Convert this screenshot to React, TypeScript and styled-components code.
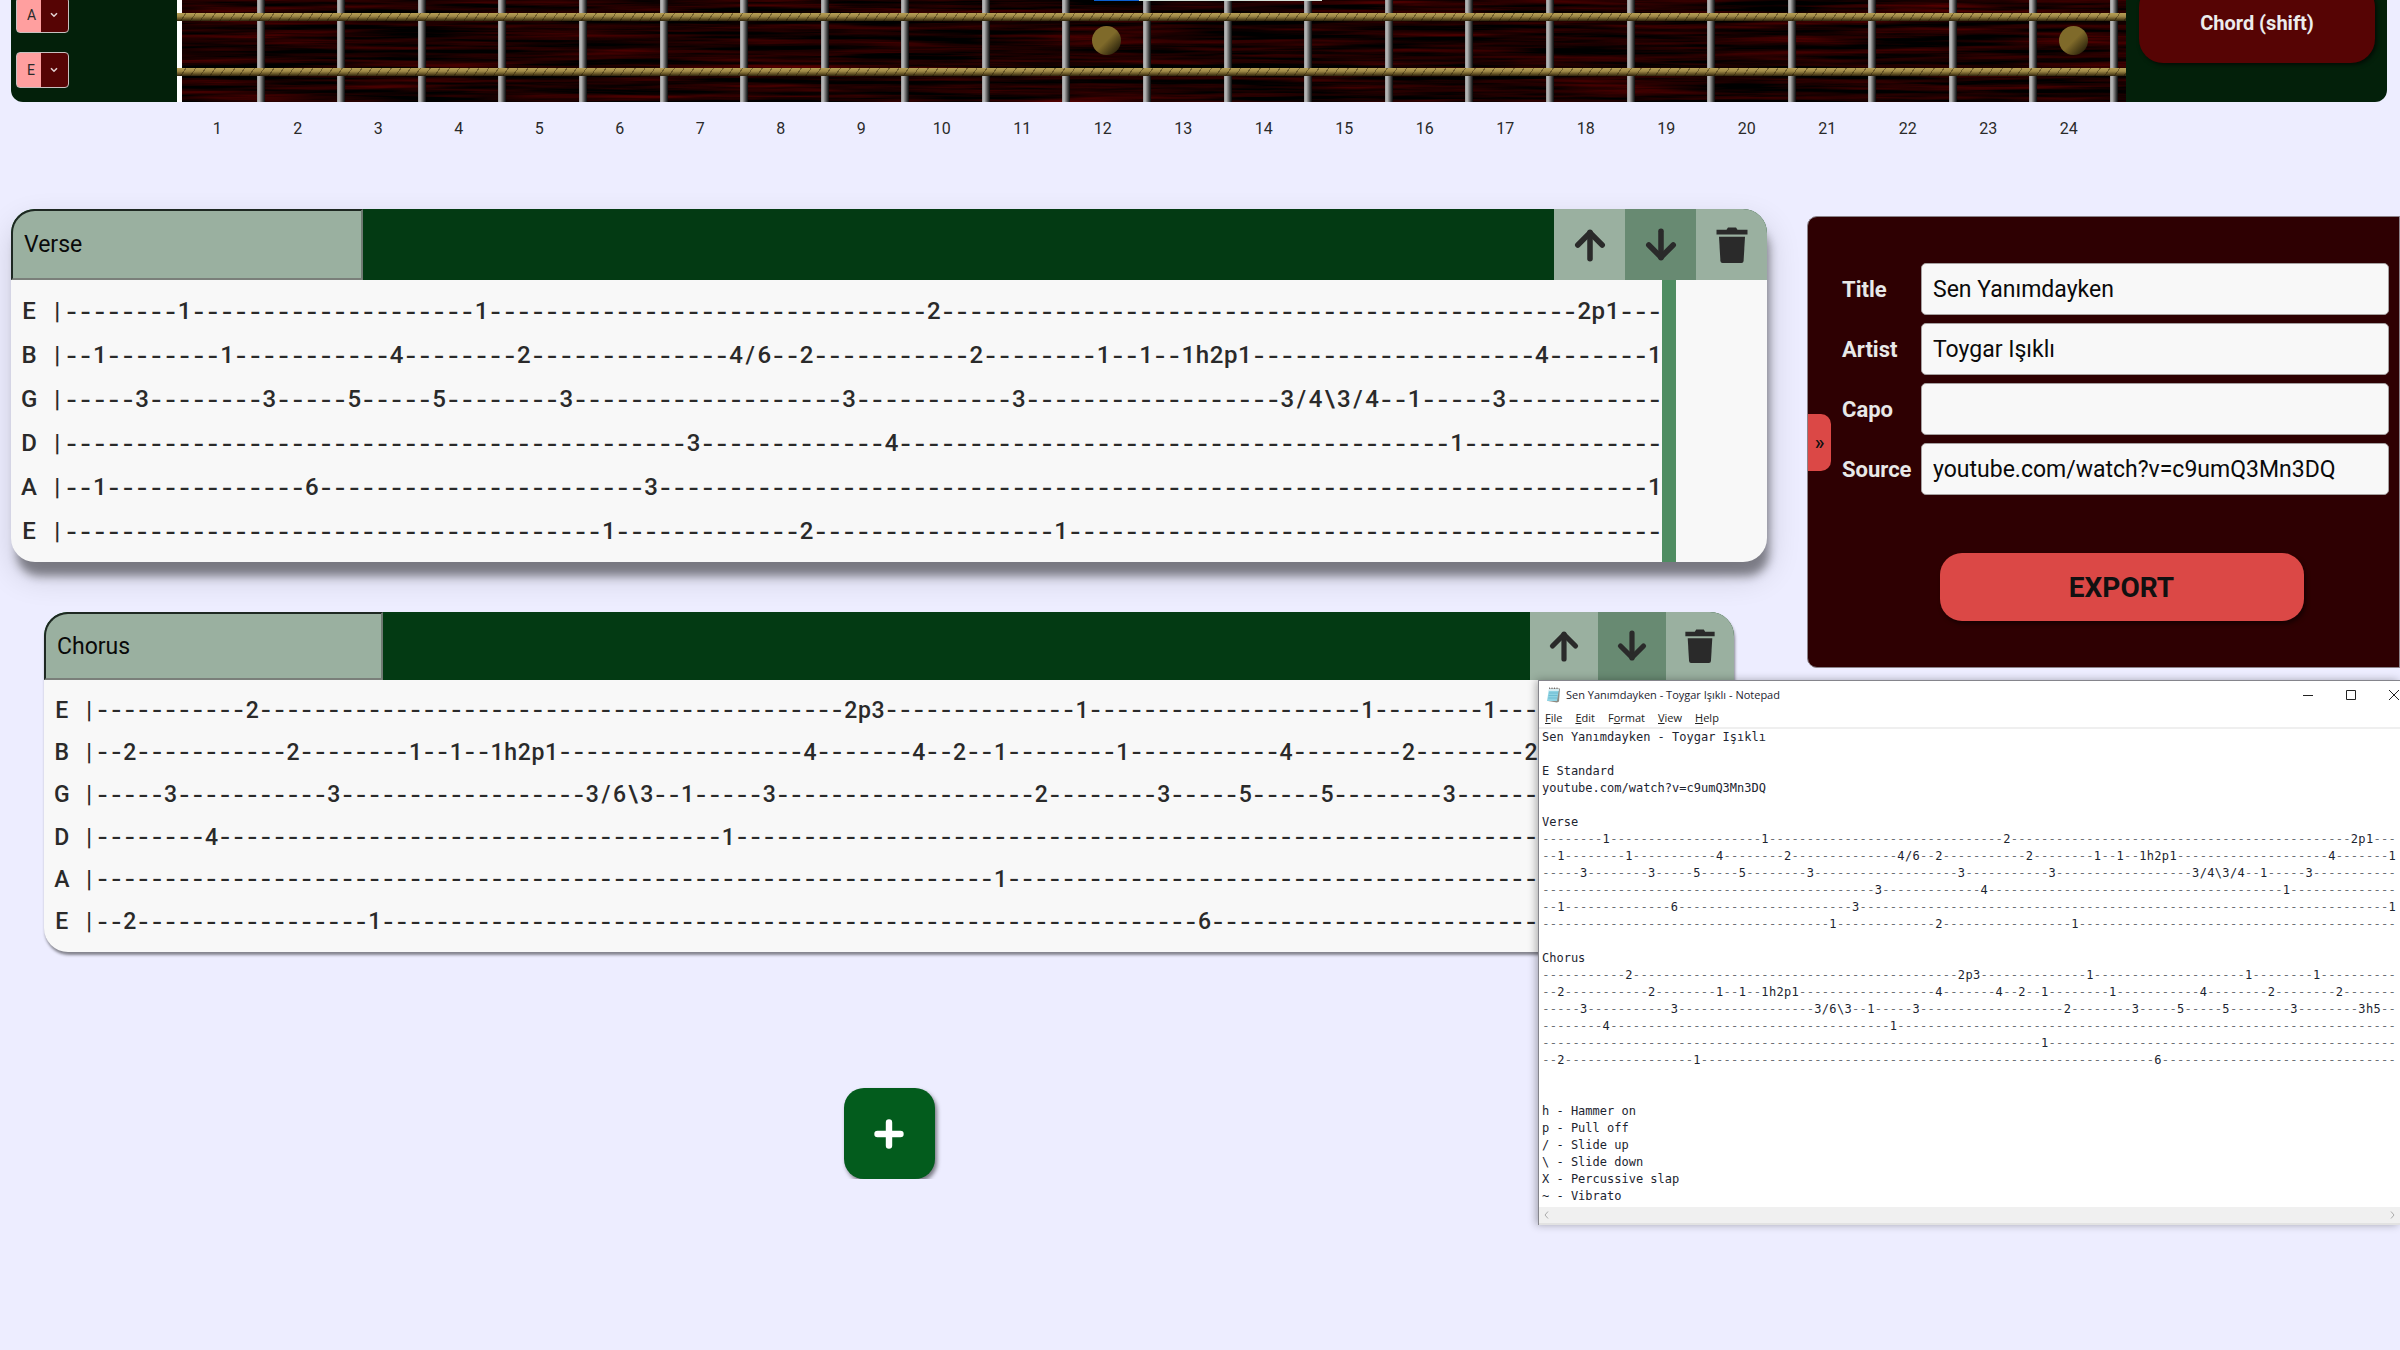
import React from "react";
import styled, { createGlobalStyle } from "styled-components";

const GlobalStyle = createGlobalStyle`
  *, *::before, *::after { box-sizing: border-box; }
  body {
    margin: 0;
    background: #ededff;
    color: #2a2a2a;
    font-family: Roboto, "Liberation Sans", sans-serif;
    overflow: hidden;
  }
  button, input, select { font-family: inherit; }
`;

/* ---------- tab data ---------- */

const COLUMNS = 113;
const FRETS = Array.from({ length: 24 }, (_, i) => i + 1);

type Note = [number, string];
type Line = { name: string; notes: Note[] };
type Section = { title: string; lines: Line[] };

const verse: Section = {
  title: "Verse",
  lines: [
    { name: "E", notes: [[8, "1"], [29, "1"], [61, "2"], [107, "2p1"]] },
    {
      name: "B",
      notes: [
        [2, "1"], [11, "1"], [23, "4"], [32, "2"], [47, "4/6"], [52, "2"], [64, "2"],
        [73, "1"], [76, "1"], [79, "1h2p1"], [104, "4"], [112, "1"],
      ],
    },
    {
      name: "G",
      notes: [
        [5, "3"], [14, "3"], [20, "5"], [26, "5"], [35, "3"], [55, "3"], [67, "3"],
        [86, "3/4\\3/4"], [95, "1"], [101, "3"],
      ],
    },
    { name: "D", notes: [[44, "3"], [58, "4"], [98, "1"]] },
    { name: "A", notes: [[2, "1"], [17, "6"], [41, "3"], [112, "1"]] },
    { name: "E", notes: [[38, "1"], [52, "2"], [70, "1"]] },
  ],
};

const chorus: Section = {
  title: "Chorus",
  lines: [
    { name: "E", notes: [[11, "2"], [55, "2p3"], [72, "1"], [93, "1"], [102, "1"]] },
    {
      name: "B",
      notes: [
        [2, "2"], [14, "2"], [23, "1"], [26, "1"], [29, "1h2p1"], [52, "4"], [60, "4"],
        [63, "2"], [66, "1"], [75, "1"], [87, "4"], [96, "2"], [105, "2"],
      ],
    },
    {
      name: "G",
      notes: [
        [5, "3"], [17, "3"], [36, "3/6\\3"], [43, "1"], [49, "3"], [69, "2"], [78, "3"],
        [84, "5"], [90, "5"], [99, "3"], [108, "3h5"],
      ],
    },
    { name: "D", notes: [[8, "4"], [46, "1"]] },
    { name: "A", notes: [[66, "1"]] },
    { name: "E", notes: [[2, "2"], [20, "1"], [81, "6"]] },
  ],
};

function toChars(line: Line): string[] {
  const chars = Array<string>(COLUMNS).fill("-");
  line.notes.forEach(([start, text]) => {
    text.split("").forEach((c, i) => {
      chars[start + i] = c;
    });
  });
  return chars;
}

/* ---------- fretboard ---------- */

const Neck = styled.header`
  display: flex;
  height: 102px;
  margin: 0 13px 0 11px;
  border-radius: 0 0 12px 12px;
  background: #03200a;
  overflow: hidden;
`;

const Tuning = styled.div`
  flex: 0 0 166px;
  display: flex;
  flex-direction: column;
  justify-content: flex-end;
  gap: 19px;
  padding: 0 0 14px 5px;
`;

const TuneBox = styled.div`
  display: grid;
  flex: none;
  width: 53px;
  height: 36px;
  > * { grid-area: 1 / 1; }
  svg { justify-self: end; align-self: center; margin-right: 11px; pointer-events: none; }
`;

const TuneSelect = styled.select`
  appearance: none;
  width: 100%;
  height: 100%;
  padding: 0 0 0 10px;
  border: 1px solid #c8c0c0;
  border-radius: 4px;
  background: linear-gradient(90deg, #ff9f9f 24px, #560404 24px);
  color: #2a2a2a;
  font-size: 14px;
`;

const Board = styled.div`
  position: relative;
  flex: 1;
  border-left: 5px solid #fff;
  padding: 0 8px 0 2px;
  background: #180001;
`;

const Wood = styled.svg`
  position: absolute;
  inset: 0;
  width: 100%;
  height: 100%;
`;

const Frets = styled.div`
  position: relative;
  display: grid;
  grid-template-columns: repeat(24, 1fr);
  height: 100%;
`;

const Fret = styled.div`
  display: flex;
  align-items: center;
  justify-content: center;
  padding: 0 8px 21px 0;
  background: linear-gradient(90deg, #9a9a9a, #bcbcbc 25%, #808080 50%, #404040 75%, #0a0a0a)
    right / 8px 100% no-repeat;
`;

const Inlay = styled.span`
  width: 29px;
  height: 29px;
  border-radius: 50%;
  background: linear-gradient(135deg, #7f6a2a 50%, #1c1606 95%);
`;

const StringLine = styled.div`
  position: absolute;
  left: -5px;
  right: 0;
  bottom: 26px;
  height: 8px;
  background:
    repeating-linear-gradient(125deg, transparent 0 7px, rgba(30, 20, 0, 0.4) 7px 8px),
    linear-gradient(#b79f55, #a08a48 40%, #6a5829 70%, #2c220c);
  & + & { bottom: 81px; }
`;

const PopupEdge = styled.div`
  position: absolute;
  top: 0;
  left: 912px;
  width: 228px;
  height: 1px;
  background: linear-gradient(90deg, #0a5ed0 45px, #d5e2d8 45px);
`;

const ChordArea = styled.div`
  flex: 0 0 261px;
  display: flex;
  align-items: flex-end;
  padding: 0 12px 39px 13px;
`;

const ChordButton = styled.button`
  flex: 1;
  flex-shrink: 0;
  height: 80px;
  border: 0;
  border-radius: 24px;
  background: #560404;
  box-shadow: 2px 2px 4px rgba(0, 0, 0, 0.6);
  color: #ececec;
  font-size: 20px;
  font-weight: 700;
`;

const FretNumbers = styled.ol`
  display: grid;
  grid-template-columns: repeat(24, 1fr);
  margin: 0;
  padding: 15px 291px 0 177px;
  list-style: none;
  font-size: 16px;
  line-height: 24px;
  text-align: center;
`;

/* ---------- sections ---------- */

const Main = styled.main`
  display: flex;
  align-items: flex-start;
  gap: 40px;
  padding: 68px 0 0 11px;
`;

const Sections = styled.div`
  flex: 1;
  min-width: 0;
  display: flex;
  flex-direction: column;
`;

const Card = styled.section<{ $active?: boolean }>`
  margin: ${(p) => (p.$active ? "0 0 50px" : "0 33px 136px")};
  border-radius: 24px;
  background: #f8f8f8;
  overflow: hidden;
  font-size: ${(p) => (p.$active ? 24 : 23)}px;
  box-shadow: ${(p) =>
    p.$active
      ? "4px 16px 10px -2px rgba(0,0,0,.42), 2px 14px 32px rgba(0,0,0,.16)"
      : "1px 3px 3px rgba(0,0,0,.45)"};
`;

const CardHead = styled.div<{ $active?: boolean }>`
  display: flex;
  height: ${(p) => (p.$active ? 71 : 68)}px;
  background: #033a13;
`;

const NameInput = styled.input`
  width: calc(20% + 1px);
  margin: 0 auto 0 0;
  padding: 0 11px;
  border: 2px solid;
  border-color: #1e2822 #6f7a72 #7a7f7a #1e2822;
  border-radius: 24px 0 0 0;
  background: #9ab0a0;
  color: #0a0a0a;
  font-size: 23px;
`;

const HeadButton = styled.button<{ $dark?: boolean }>`
  display: flex;
  align-items: center;
  justify-content: center;
  aspect-ratio: 1;
  height: 100%;
  padding: 0;
  border: 0;
  background: ${(p) => (p.$dark ? "#688a72" : "#9ab0a0")};
  color: #2a2a2a;
`;

const CardBody = styled.div<{ $active?: boolean }>`
  display: flex;
  height: ${(p) => (p.$active ? 282 : 272)}px;
  padding-left: 11px;
`;

const Staff = styled.div`
  flex: 1;
  display: grid;
  grid-auto-rows: 1fr;
  padding: 9px 0;
`;

const Playhead = styled.div<{ $active?: boolean }>`
  flex: 0 0 14px;
  margin-right: ${(p) => (p.$active ? 91 : 87)}px;
  background: ${(p) => (p.$active ? "#4f8d62" : "transparent")};
`;

const Row = styled.div<{ $cells: number }>`
  display: grid;
  grid-template-columns: repeat(${(p) => p.$cells}, minmax(0, 1fr));
  align-items: center;
  justify-items: center;
`;

const Cell = styled.span<{ $dash?: boolean }>`
  font-family: ${(p) => (p.$dash ? "Inter" : "Roboto")}, sans-serif;
  font-weight: 500;
`;

const AddButton = styled.button`
  align-self: center;
  display: flex;
  align-items: center;
  justify-content: center;
  width: 91px;
  height: 91px;
  padding: 0;
  border: 0;
  border-radius: 20px;
  background: #035c1d;
  box-shadow: 2px 3px 4px rgba(0, 0, 0, 0.5);
  color: #fff;
`;

/* ---------- song details ---------- */

const Panel = styled.aside`
  flex: 0 0 593px;
  display: flex;
  align-items: center;
  height: 452px;
  margin-top: 7px;
  border: 1px solid #8b8389;
  border-radius: 10px 0 0 10px;
  background: #2e0002;
`;

const Collapse = styled.button`
  flex: none;
  width: 23px;
  height: 57px;
  padding: 0;
  border: 0;
  border-radius: 0 10px 10px 0;
  background: #db4846;
  color: #111;
  font-size: 20px;
  font-weight: 500;
`;

const Form = styled.form`
  flex: 1;
  display: flex;
  flex-direction: column;
  align-items: center;
  padding: 0 10px 0 11px;
`;

const Fields = styled.div`
  align-self: stretch;
  display: grid;
  grid-template-columns: 79px 1fr;
  row-gap: 8px;
  align-items: center;
  margin-bottom: 58px;
`;

const Label = styled.label`
  color: #e8e8e8;
  font-size: 22px;
  font-weight: 700;
`;

const TextInput = styled.input`
  min-width: 0;
  height: 52px;
  padding: 0 11px;
  border: 1px solid #a5a0a0;
  border-radius: 5px;
  background: #f8f8f8;
  color: #0a0a0a;
  font-size: 23px;
`;

const ExportButton = styled.button`
  width: 364px;
  height: 68px;
  margin-left: 12px;
  border: 0;
  border-radius: 22px;
  background: #db4846;
  box-shadow: 2px 3px 4px rgba(0, 0, 0, 0.5);
  color: #111;
  font-size: 28px;
  font-weight: 700;
`;

/* ---------- notepad window ---------- */

const Notepad = styled.section`
  position: absolute;
  top: 680px;
  right: 0;
  width: 862px;
  border: solid #85858c;
  border-width: 1px 0 0 1px;
  background: #fff;
  box-shadow: -2px 0 8px rgba(0, 0, 0, 0.3);
  color: #1c2430;
`;

const TitleBar = styled.div`
  display: flex;
  align-items: center;
  gap: 5px;
  height: 27px;
  padding-left: 7px;
  overflow: hidden;
  font-family: "Open Sans", sans-serif;
`;

const WindowTitle = styled.span`
  margin-right: auto;
  font-size: 11px;
  white-space: nowrap;
`;

const WindowButton = styled.button`
  flex: none;
  display: flex;
  justify-content: center;
  width: 38px;
  padding: 0;
  border: 0;
  background: none;
  color: #222;
  &:last-child { margin-right: -13px; }
`;

const Menu = styled.nav`
  display: flex;
  gap: 13px;
  height: 21px;
  padding-left: 6px;
  border-bottom: 2px solid #efefef;
`;

const MenuItem = styled.button`
  padding: 0;
  border: 0;
  background: none;
  color: #222;
  font-family: "Open Sans", sans-serif;
  font-size: 11px;
  line-height: 19px;
`;

const Sheet = styled.div`
  padding: 0 4px 2px 3px;
  font-family: "DejaVu Sans Mono", monospace;
  font-size: 12px;
  line-height: 17px;
`;

const SheetCell = styled.span<{ $dash?: boolean }>`
  color: ${(p) => (p.$dash ? "#6c7076" : "#1c2430")};
`;

const Prose = styled.pre`
  margin: 0;
  font: inherit;
`;

const ScrollBar = styled.div`
  display: flex;
  justify-content: space-between;
  align-items: center;
  height: 18px;
  padding: 0 5px;
  border-bottom: 2px solid #e2e2e2;
  background: #f0f0f0;
`;

/* ---------- drawings ---------- */

const ArrowIcon = ({ down, size }: { down?: boolean; size: number }) => (
  <svg width={size} height={size} viewBox="0 0 32 32" fill="none" stroke="currentColor"
    strokeWidth="5.2" strokeLinejoin="bevel" strokeLinecap="round">
    <g transform={down ? "rotate(180 16 16)" : undefined}>
      <path d="M16 4V29" />
      <path d="M4.500 16 16 4.500 27.500 16" />
    </g>
  </svg>
);

const TrashIcon = ({ size }: { size: number }) => (
  <svg width={size} height={size} viewBox="0 0 36 36" fill="currentColor">
    <path d="M2.500 2.800H12.500L14 .6H22L23.500 2.800H33.500V7.600H2.500Z" />
    <path d="M5 9.800H31L29.600 34Q29.400 36 27.500 36H8.500Q6.600 36 6.400 34Z" />
  </svg>
);

const NotepadIcon = () => (
  <svg width="15" height="16" viewBox="0 0 15 16">
    <path d="M4 1.500H14L13 14.500 11 15.500 2 14Z" fill="#8d8a82" />
    <path d="M3 2H13L11 14H1Z" fill="#8fd3e3" />
    <path d="M3 2H13L12.700 4H2.700Z" fill="#d8eef3" />
    <path d="M3 6H12M2.700 8.500H11.500M2.300 11H11" stroke="#5fb3c8" strokeWidth=".7" />
    <path d="M3.500 2V.5M6 2V.5M8.500 2V.5M11 2V.5" stroke="#555" strokeWidth=".8" />
  </svg>
);

/* ---------- components ---------- */

const TabRow = ({ chars, mono }: { chars: string[]; mono?: boolean }) => {
  const Char = mono ? SheetCell : Cell;
  return (
    <Row $cells={chars.length}>
      {chars.map((c, i) => (
        <Char key={i} $dash={c === "-"}>{c}</Char>
      ))}
    </Row>
  );
};

const SectionCard = ({ section, active }: { section: Section; active?: boolean }) => (
  <Card $active={active}>
    <CardHead $active={active}>
      <NameInput aria-label="Section name" defaultValue={section.title} />
      <HeadButton type="button" aria-label="Move up"><ArrowIcon size={active ? 34 : 32} /></HeadButton>
      <HeadButton type="button" aria-label="Move down" $dark><ArrowIcon down size={active ? 34 : 32} /></HeadButton>
      <HeadButton type="button" aria-label="Delete"><TrashIcon size={active ? 36 : 34} /></HeadButton>
    </CardHead>
    <CardBody $active={active}>
      <Staff>
        {section.lines.map((line, i) => (
          <TabRow key={i} chars={[line.name, " ", "|", ...toChars(line)]} />
        ))}
      </Staff>
      <Playhead $active={active} />
    </CardBody>
  </Card>
);

const fields = [
  { id: "title", label: "Title", value: "Sen Yanımdayken" },
  { id: "artist", label: "Artist", value: "Toygar Işıklı" },
  { id: "capo", label: "Capo", value: "" },
  { id: "source", label: "Source", value: "youtube.com/watch?v=c9umQ3Mn3DQ" },
];

const menus = [["", "F", "ile"], ["", "E", "dit"], ["F", "o", "rmat"], ["", "V", "iew"], ["", "H", "elp"]];

const TuningPicker = ({ note }: { note: string }) => (
  <TuneBox>
    <TuneSelect aria-label={`${note} string tuning`} defaultValue={note}>
      <option>{note}</option>
    </TuneSelect>
    <svg width="8" height="6" viewBox="0 0 8 6" fill="none" stroke="#e0d0d0" strokeWidth="1.600">
      <path d="M1 1.200 4 4.200 7 1.200" />
    </svg>
  </TuneBox>
);

export default function App() {
  return (
    <>
      <GlobalStyle />
      <Neck>
        <Tuning>
          <TuningPicker note="A" />
          <TuningPicker note="E" />
        </Tuning>
        <Board>
          <Wood aria-hidden="true">
            <filter id="grain" x="0" y="0" width="100%" height="100%" colorInterpolationFilters="sRGB">
              <feTurbulence type="fractalNoise" baseFrequency="0.006 0.2" numOctaves="4" seed="7" />
              <feColorMatrix values="0.6 0 0 0 -0.2  0 0 0 0 0  0 0 0 0 0  0 0 0 0 1" />
            </filter>
            <rect width="100%" height="100%" filter="url(#grain)" />
          </Wood>
          <Frets>
            {FRETS.map((n) => (
              <Fret key={n}>{n % 12 === 0 && <Inlay />}</Fret>
            ))}
          </Frets>
          <StringLine />
          <StringLine />
          <PopupEdge />
        </Board>
        <ChordArea>
          <ChordButton type="button">Chord (shift)</ChordButton>
        </ChordArea>
      </Neck>
      <FretNumbers>
        {FRETS.map((n) => (
          <li key={n}>{n}</li>
        ))}
      </FretNumbers>

      <Main>
        <Sections>
          <SectionCard section={verse} active />
          <SectionCard section={chorus} />
          <AddButton type="button" aria-label="Add section">
            <svg width="30" height="30" viewBox="0 0 30 30" stroke="currentColor" strokeWidth="6.400" strokeLinecap="round">
              <path d="M15 3.500V26.500M3.500 15H26.500" />
            </svg>
          </AddButton>
        </Sections>
        <Panel>
          <Collapse type="button" aria-label="Collapse panel">»</Collapse>
          <Form onSubmit={(e) => e.preventDefault()}>
            <Fields>
              {fields.map((f) => (
                <React.Fragment key={f.id}>
                  <Label htmlFor={f.id}>{f.label}</Label>
                  <TextInput id={f.id} defaultValue={f.value} />
                </React.Fragment>
              ))}
            </Fields>
            <ExportButton type="submit">EXPORT</ExportButton>
          </Form>
        </Panel>
      </Main>

      <Notepad>
        <TitleBar>
          <NotepadIcon />
          <WindowTitle>Sen Yanımdayken - Toygar Işıklı - Notepad</WindowTitle>
          <WindowButton type="button" aria-label="Minimize">
            <svg width="10" height="10" stroke="currentColor"><path d="M0 5.500H10" /></svg>
          </WindowButton>
          <WindowButton type="button" aria-label="Maximize">
            <svg width="10" height="10" stroke="currentColor" fill="none"><path d="M.5 .5H9.500V9.500H.5Z" /></svg>
          </WindowButton>
          <WindowButton type="button" aria-label="Close">
            <svg width="10" height="10" stroke="currentColor"><path d="M0 0 10 10M10 0 0 10" /></svg>
          </WindowButton>
        </TitleBar>
        <Menu>
          {menus.map(([a, key, b]) => (
            <MenuItem type="button" key={key}>{a}<u>{key}</u>{b}</MenuItem>
          ))}
        </Menu>
        <Sheet>
          <Prose>{"Sen Yanımdayken - Toygar Işıklı\n\nE Standard\nyoutube.com/watch?v=c9umQ3Mn3DQ\n\nVerse"}</Prose>
          {verse.lines.map((line, i) => <TabRow key={i} mono chars={toChars(line)} />)}
          <Prose>{"\nChorus"}</Prose>
          {chorus.lines.map((line, i) => <TabRow key={i} mono chars={toChars(line)} />)}
          <Prose>{"\n\nh - Hammer on\np - Pull off\n/ - Slide up\n\\ - Slide down\nX - Percussive slap\n~ - Vibrato"}</Prose>
        </Sheet>
        <ScrollBar>
          <svg width="5" height="8" fill="none" stroke="#aaa"><path d="M4 .5 1 4 4 7.500" /></svg>
          <svg width="5" height="8" fill="none" stroke="#aaa"><path d="M1 .5 4 4 1 7.500" /></svg>
        </ScrollBar>
      </Notepad>
    </>
  );
}
